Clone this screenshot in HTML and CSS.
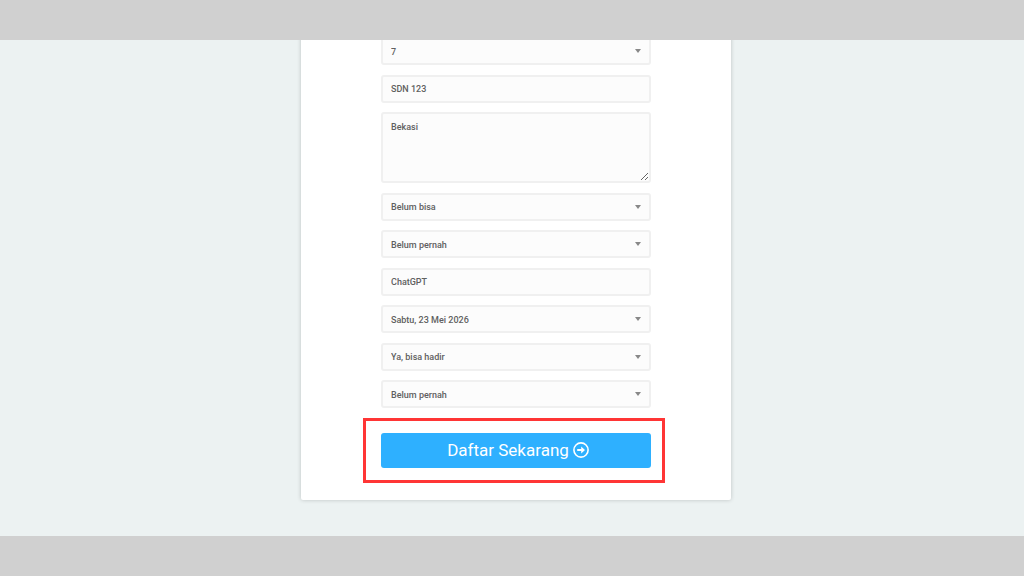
FILE: index.html
```html
<!DOCTYPE html>
<html lang="id">
<head>
<meta charset="utf-8">
<meta name="viewport" content="width=device-width, initial-scale=1">
<title>Formulir Pendaftaran</title>
<link rel="stylesheet" href="styles.css">
</head>
<body>
<div class="bar"></div>
<main class="page">
  <form class="card">
    <div class="fields">
      <div class="select"><select class="field" aria-label="Usia"><option>7</option></select></div>
      <input class="field" type="text" aria-label="Asal sekolah" value="SDN 123">
      <textarea class="field area" aria-label="Alamat">Bekasi</textarea>
      <div class="select"><select class="field" aria-label="Kemampuan"><option>Belum bisa</option></select></div>
      <div class="select"><select class="field" aria-label="Pengalaman"><option>Belum pernah</option></select></div>
      <input class="field" type="text" aria-label="Sumber informasi" value="ChatGPT">
      <div class="select"><select class="field" aria-label="Jadwal"><option>Sabtu, 23 Mei 2026</option></select></div>
      <div class="select"><select class="field" aria-label="Kehadiran"><option>Ya, bisa hadir</option></select></div>
      <div class="select"><select class="field" aria-label="Pernah ikut"><option>Belum pernah</option></select></div>
    </div>
    <div class="action">
      <button class="submit" type="button">
        <span>Daftar Sekarang</span>
        <svg class="icon" viewBox="0 0 16 16" aria-hidden="true">
          <circle cx="8" cy="8" r="7.1" fill="none" stroke="currentColor" stroke-width="1.6"/>
          <path d="M4.2 7h4V4.5L12 8l-3.8 3.5V9h-4z" fill="currentColor"/>
        </svg>
      </button>
      <div class="highlight"></div>
    </div>
  </form>
</main>
<div class="bar"></div>
</body>
</html>
```
FILE: styles.css
```css
* { box-sizing: border-box; }
body {
  margin: 0;
  height: 100vh;
  display: flex;
  flex-direction: column;
  background: #ecf2f2;
  font-family: Roboto, "Liberation Sans", sans-serif;
}
.bar {
  flex: 0 0 40px;
  background: #d0d0d0;
}
.page {
  flex: 1;
  min-height: 0;
  overflow: hidden;
  display: flex;
  justify-content: center;
  align-items: flex-start;
  padding-left: 8px;
}
.card {
  width: 100%;
  max-width: 430px;
  margin-top: -23px;
  padding: 20px 80px 32px;
  background: #fff;
  border-radius: 2px;
  box-shadow: 0 0 4px rgba(0, 0, 0, 0.2);
}
.fields {
  min-height: 371px;
  display: flex;
  flex-direction: column;
  justify-content: space-between;
}
.select {
  position: relative;
  display: flex;
}
.select::after {
  content: "";
  position: absolute;
  right: 10px;
  top: 12px;
  border: 3px solid transparent;
  border-top: 4px solid #888;
  border-bottom: 0;
  pointer-events: none;
}
.field {
  display: block;
  width: 100%;
  height: 28px;
  margin: 0;
  padding: 0 8px;
  appearance: none;
  border: 2px solid #f0f0f0;
  border-radius: 3px;
  background: #fcfcfc;
  color: #606060;
  font: 500 9px/14px Roboto, "Liberation Sans", sans-serif;
}
.select .field {
  padding-top: 1px;
}
.area {
  height: 71px;
  padding-top: 6px;
  resize: vertical;
}
.action {
  position: relative;
  margin-top: 25px;
}
.submit {
  width: 100%;
  height: 35px;
  display: flex;
  align-items: center;
  justify-content: center;
  gap: 4px;
  padding: 0 0 1px 4px;
  border: 0;
  border-radius: 3px;
  background: #2eb0ff;
  color: #fff;
  font: 400 17px/20px Roboto, "Liberation Sans", sans-serif;
}
.icon {
  width: 16px;
  height: 16px;
}
.highlight {
  position: absolute;
  inset: -15px -14px -15px -18px;
  border: 3px solid #ff3535;
  pointer-events: none;
}
```
